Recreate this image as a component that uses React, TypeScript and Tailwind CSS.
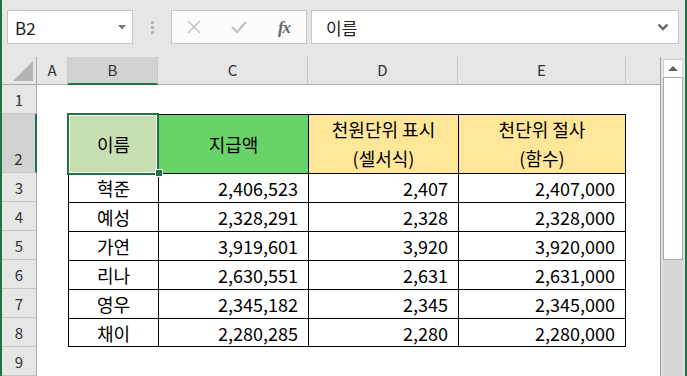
import React from "react";

const rows = [
  ["혁준", "2,406,523", "2,407", "2,407,000"],
  ["예성", "2,328,291", "2,328", "2,328,000"],
  ["가연", "3,919,601", "3,920", "3,920,000"],
  ["리나", "2,630,551", "2,631", "2,631,000"],
  ["영우", "2,345,182", "2,345", "2,345,000"],
  ["채이", "2,280,285", "2,280", "2,280,000"],
];

function RowHeader({ n, h, selected }: { n: number; h: string; selected?: boolean }) {
  return (
    <div
      className={
        "w-[35px] shrink-0 flex items-end justify-center pb-[4px] text-[15px] leading-[18px] text-[#333] border-b border-[#c8c8c8] " +
        h +
        (selected
          ? " bg-[#d2d2d2] border-r-2 border-r-[#217346]"
          : " bg-[#e6e6e6] border-r border-r-[#ababab]")
      }
    >
      {n}
    </div>
  );
}

export default function App() {
  return (
    <div className="w-[687px] h-[376px] overflow-hidden bg-[#e6e6e6] border-l-2 border-r-2 border-[#217346] flex flex-col font-['Noto_Sans_CJK_KR','Noto_Sans',sans-serif] text-black">
      {/* formula bar */}
      <div className="h-[57px] shrink-0 flex items-start pt-[10px]">
        <div className="ml-[5px] w-[126px] h-[34px] bg-white border border-[#c6c6c6] flex items-center pl-[7px] pr-[6px]">
          <span className="flex-1 text-[17px] text-[#222] leading-none">B2</span>
          <svg width="8" height="5" viewBox="0 0 8 5">
            <polygon points="0,0 8,0 4,4.5" fill="#777" />
          </svg>
        </div>
        <div className="w-[38px] h-[34px] flex flex-col items-center justify-center gap-[2px]">
          <div className="w-[3px] h-[3px] bg-[#b4b4b4]" />
          <div className="w-[3px] h-[3px] bg-[#b4b4b4]" />
          <div className="w-[3px] h-[3px] bg-[#b4b4b4]" />
        </div>
        <div className="w-[136px] h-[34px] bg-[#fcfcfc] border border-[#c6c6c6] flex items-center">
          <div className="w-[44px] flex justify-center">
            <svg width="14" height="14" viewBox="0 0 14 14">
              <path d="M1 1 L13 13 M13 1 L1 13" stroke="#c3c3c3" strokeWidth="1.6" fill="none" />
            </svg>
          </div>
          <div className="w-[46px] flex justify-center">
            <svg width="16" height="12" viewBox="0 0 16 12">
              <path d="M1 6 L6 11 L15 1" stroke="#c3c3c3" strokeWidth="2.4" fill="none" />
            </svg>
          </div>
          <div className="w-[44px] flex justify-center">
            <span className="font-['Liberation_Serif',serif] italic font-bold text-[17px] text-[#666] leading-none tracking-[-1px]">
              fx
            </span>
          </div>
        </div>
        <div className="ml-[4px] w-[368px] h-[34px] bg-white border border-[#c6c6c6] flex items-center pl-[14px] pr-[9px]">
          <span className="flex-1 text-[17px] text-[#222] leading-none">이름</span>
          <svg width="12" height="8" viewBox="0 0 12 8">
            <path d="M1.5 1.5 L6 6 L10.5 1.5" stroke="#666" strokeWidth="2.4" fill="none" />
          </svg>
        </div>
      </div>

      {/* sheet */}
      <div className="flex-1 flex min-h-0">
        <div className="w-[658px] shrink-0 bg-white flex flex-col">
          {/* column headers */}
          <div className="h-[28px] shrink-0 flex bg-[#e6e6e6] text-[15px] text-[#333]">
            <div className="w-[35px] shrink-0 border-r border-b border-[#ababab] flex items-end justify-end pr-[3px] pb-[3px]">
              <svg width="20" height="20" viewBox="0 0 20 20">
                <polygon points="20,0 20,20 0,20" fill="#b4b4b4" />
              </svg>
            </div>
            <div className="w-[31px] shrink-0 border-r border-r-[#c8c8c8] border-b border-b-[#ababab] flex items-center justify-center">A</div>
            <div className="w-[90px] shrink-0 bg-[#d2d2d2] border-r border-r-[#c8c8c8] border-b-2 border-b-[#217346] flex items-center justify-center">B</div>
            <div className="w-[150px] shrink-0 border-r border-r-[#c8c8c8] border-b border-b-[#ababab] flex items-center justify-center">C</div>
            <div className="w-[150px] shrink-0 border-r border-r-[#c8c8c8] border-b border-b-[#ababab] flex items-center justify-center">D</div>
            <div className="w-[168px] shrink-0 border-r border-r-[#c8c8c8] border-b border-b-[#ababab] flex items-center justify-center">E</div>
            <div className="flex-1 border-b border-b-[#ababab]" />
          </div>

          {/* row 1 */}
          <div className="h-[29px] shrink-0 flex">
            <RowHeader n={1} h="h-[29px]" />
            <div className="flex-1" />
          </div>

          {/* row 2 */}
          <div className="h-[59px] shrink-0 flex text-[18px]">
            <RowHeader n={2} h="h-[59px]" selected />
            <div className="w-[31px] shrink-0" />
            <div className="relative w-[90px] shrink-0 bg-[#c6e0b4] border-l border-t border-black flex items-center justify-center">
              이름
              <div className="absolute -left-[2px] -top-[2px] w-[92px] h-[62px] border-2 border-[#217346]">
                <div className="w-full h-full border border-white" />
              </div>
              <div className="absolute left-[86px] top-[54px] w-[8px] h-[8px] bg-white p-[1px]">
                <div className="w-full h-full bg-[#217346]" />
              </div>
            </div>
            <div className="w-[150px] shrink-0 bg-[#68d468] border-l border-t border-black flex items-center justify-center">
              지급액
            </div>
            <div className="w-[150px] shrink-0 bg-[#ffe699] border-l border-t border-black flex flex-col items-center justify-center leading-[29px]">
              <span>천원단위 표시</span>
              <span>(셀서식)</span>
            </div>
            <div className="w-[168px] shrink-0 bg-[#ffe699] border-l border-r border-t border-black flex flex-col items-center justify-center leading-[29px]">
              <span>천단위 절사</span>
              <span>(함수)</span>
            </div>
            <div className="flex-1" />
          </div>

          {rows.map((r, i) => {
            const last = i === rows.length - 1;
            const bb = last ? " border-b" : "";
            return (
              <div key={i} className="h-[29px] shrink-0 flex text-[18px] leading-none">
                <RowHeader n={i + 3} h="h-[29px]" />
                <div className="w-[31px] shrink-0" />
                <div className={"w-[90px] shrink-0 border-l border-t border-black flex items-center justify-center" + bb}>
                  {r[0]}
                </div>
                <div className={"w-[150px] shrink-0 border-l border-t border-black flex items-center justify-end pr-[10px]" + bb}>
                  {r[1]}
                </div>
                <div className={"w-[150px] shrink-0 border-l border-t border-black flex items-center justify-end pr-[10px]" + bb}>
                  {r[2]}
                </div>
                <div className={"w-[168px] shrink-0 border-l border-r border-t border-black flex items-center justify-end pr-[10px]" + bb}>
                  {r[3]}
                </div>
                <div className="flex-1" />
              </div>
            );
          })}

          {/* row 9 */}
          <div className="h-[29px] shrink-0 flex">
            <RowHeader n={9} h="h-[29px]" />
            <div className="flex-1" />
          </div>
        </div>

        {/* scrollbar */}
        <div className="w-[25px] shrink-0 border-l border-[#a0a0a0] flex flex-col bg-[#e6e6e6]">
          <div className="h-[2px] shrink-0" />
          <div className="mx-[2px] h-[19px] shrink-0 bg-[#fcfcfc] border border-[#d0d0d0] border-b-[#ababab] flex items-center justify-center">
            <svg width="10" height="5" viewBox="0 0 10 5">
              <polygon points="0,5 10,5 5,0" fill="#606060" />
            </svg>
          </div>
          <div className="flex-1 flex flex-col bg-[#dedede] px-[2px]">
            <div className="h-[182px] shrink-0 bg-white border border-[#ababab] border-t-0" />
            <div className="flex-1 bg-[#d6d6d6]" />
          </div>
        </div>
      </div>
    </div>
  );
}
